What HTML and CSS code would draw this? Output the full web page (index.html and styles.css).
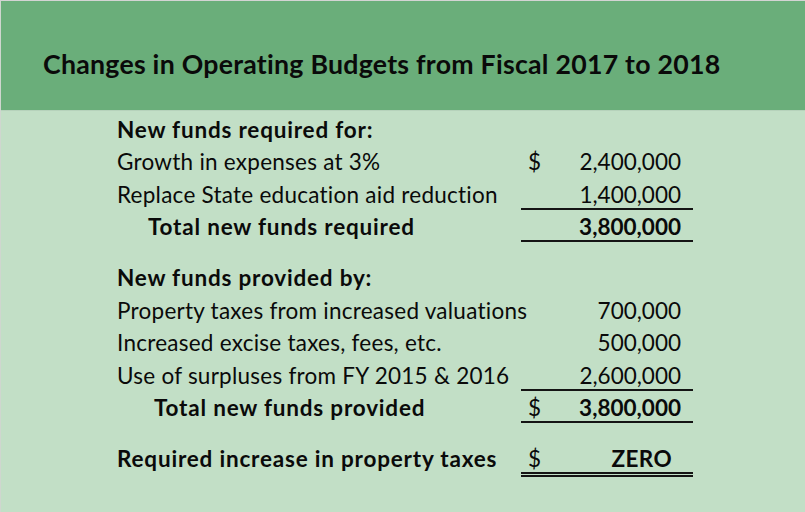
FILE: index.html
```html
<!DOCTYPE html>
<html lang="en">
<head>
<meta charset="utf-8">
<title>Changes in Operating Budgets</title>
<link rel="stylesheet" href="styles.css">
</head>
<body>
<div class="page">
  <header class="title-bar">
    <h1 class="title">Changes in Operating Budgets from Fiscal 2017 to 2018</h1>
  </header>
  <main class="sheet">
    <div class="row">
      <span class="label bold">New funds required for:</span>
    </div>
    <div class="row">
      <span class="label">Growth in expenses at 3%</span>
      <span class="amt"><span class="cur">$</span><span class="num">2,400,000</span></span>
    </div>
    <div class="row">
      <span class="label">Replace State education aid reduction</span>
      <span class="amt rule"><span class="cur"></span><span class="num">1,400,000</span></span>
    </div>
    <div class="row">
      <span class="label bold total">Total new funds required</span>
      <span class="amt rule bold"><span class="cur"></span><span class="num">3,800,000</span></span>
    </div>

    <div class="row gap">
      <span class="label bold">New funds provided by:</span>
    </div>
    <div class="row">
      <span class="label">Property taxes from increased valuations</span>
      <span class="amt"><span class="cur"></span><span class="num">700,000</span></span>
    </div>
    <div class="row">
      <span class="label">Increased excise taxes, fees, etc.</span>
      <span class="amt"><span class="cur"></span><span class="num">500,000</span></span>
    </div>
    <div class="row">
      <span class="label">Use of surpluses from FY 2015 &amp; 2016</span>
      <span class="amt rule"><span class="cur"></span><span class="num">2,600,000</span></span>
    </div>
    <div class="row">
      <span class="label bold total2">Total new funds provided</span>
      <span class="amt rule bold"><span class="cur normal">$</span><span class="num">3,800,000</span></span>
    </div>

    <div class="row gap">
      <span class="label bold">Required increase in property taxes</span>
      <span class="amt double bold"><span class="cur normal">$</span><span class="num zero">ZERO</span></span>
    </div>
  </main>
</div>
</body>
</html>
```

FILE: styles.css
```css
html, body {
  margin: 0;
  padding: 0;
}
body {
  width: 805px;
  height: 512px;
  overflow: hidden;
  background: #c2dfc6;
  font-family: Lato, "Open Sans", sans-serif;
  color: #0a0a0a;
}
.page {
  width: 805px;
  height: 512px;
  box-sizing: border-box;
  border-top: 1px solid #d4d4d4;
  border-left: 1px solid #cfd6cf;
  background: #c2dfc6;
}
.title-bar {
  height: 109px;
  background: #6aae7a;
  border-bottom: 1px solid #b6d2bb;
  display: flex;
  align-items: center;
  padding-left: 42px;
}
.title {
  margin: 0;
  font-size: 26.7px;
  letter-spacing: 0.25px;
  font-weight: 700;
  padding-top: 16px;
}
.sheet {
  padding-left: 116px;
  padding-top: 1px;
}
.row {
  display: grid;
  grid-template-columns: 404px 172px;
  height: 32.5px;
  font-size: 22.5px;
  letter-spacing: 0.25px;
}
.row.gap {
  margin-top: 18.5px;
}
.label, .amt {
  box-sizing: border-box;
  height: 32.5px;
  line-height: 30.5px;
  padding-top: 2.8px;
  white-space: nowrap;
}
.bold {
  font-weight: 700;
}
.label.bold {
  letter-spacing: 0.8px;
}
.total {
  padding-left: 31px;
}
.total2 {
  padding-left: 37px;
}
.amt {
  display: flex;
  justify-content: space-between;
  padding-left: 7px;
  padding-right: 12px;
  letter-spacing: 0;
}
.cur.normal {
  font-weight: 400;
}
.rule {
  border-bottom: 2px solid #141414;
}
.double {
  border-bottom: 5px double #141414;
  height: 35.5px;
}
.zero {
  padding-right: 9px;
  letter-spacing: 0.4px;
}
```
